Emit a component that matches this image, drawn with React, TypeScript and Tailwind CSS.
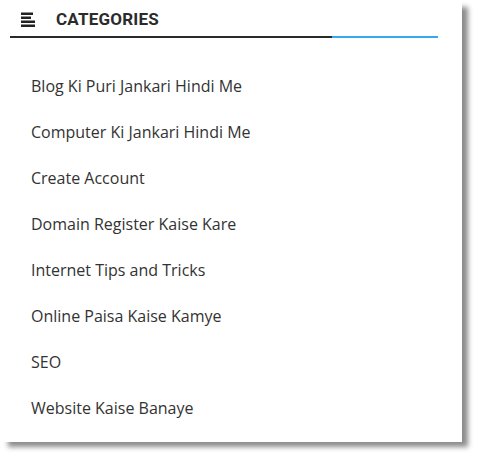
import React from 'react';

const categories = [
  'Blog Ki Puri Jankari Hindi Me',
  'Computer Ki Jankari Hindi Me',
  'Create Account',
  'Domain Register Kaise Kare',
  'Internet Tips and Tricks',
  'Online Paisa Kaise Kamye',
  'SEO',
  'Website Kaise Banaye',
];

const MenuIcon: React.FC = () => (
  <svg width="15" height="15" viewBox="0 0 15 15" className="shrink-0">
    <rect x="0" y="0.5" width="12" height="2.5" fill="#222" />
    <rect x="0" y="4.5" width="10" height="2.5" fill="#222" />
    <rect x="0" y="8.5" width="14" height="2.5" fill="#222" />
    <rect x="0" y="12.5" width="14" height="2.5" fill="#222" />
  </svg>
);

export default function App() {
  return (
    <div className="w-[478px] h-[458px] bg-white">
      <div className="w-[462px] h-[442px] bg-white shadow-[7px_6px_5px_-1px_rgba(0,0,0,0.45)] pt-[10px]">
        <div className="pl-[21px] flex items-center gap-[20px] h-[18px]">
          <MenuIcon />
          <h2 className="font-['Roboto',sans-serif] font-bold text-[17px] leading-none text-[#2b2b2b] tracking-[0.2px]">
            CATEGORIES
          </h2>
        </div>
        <div className="ml-[10px] mt-[8px] flex w-[428px]">
          <div className="h-[2px] w-[322px] bg-[#2a2a2a]" />
          <div className="h-[2px] flex-1 bg-[#35a8f0]" />
        </div>
        <ul className="mt-[37px] pl-[31px] font-['Open_Sans',sans-serif] text-[16px] text-[#333] flex flex-col gap-[24px]">
          {categories.map((c, i) => (
            <li key={i} className="leading-[22px]">
              {c}
            </li>
          ))}
        </ul>
      </div>
    </div>
  );
}
